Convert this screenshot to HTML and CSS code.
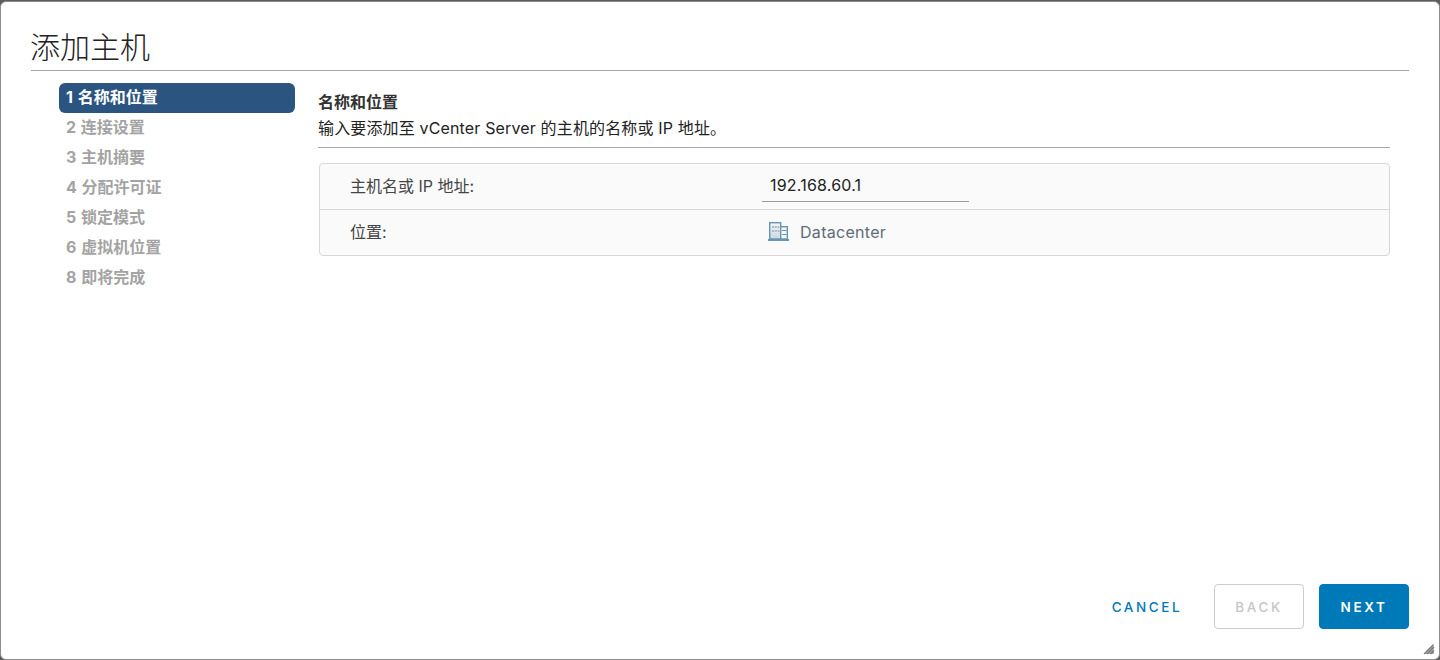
FILE: index.html
```html
<!DOCTYPE html>
<html lang="zh-CN">
<head>
    <meta charset="UTF-8">
    <title>添加主机</title>
    <link rel="stylesheet" href="styles.css">
</head>
<body>
    <div class="modal">
        <h1 class="modal-title">添加主机</h1>

        <div class="wizard">
            <!-- Steps -->
            <ul class="steps">
                <li class="step active">1 名称和位置</li>
                <li class="step">2 连接设置</li>
                <li class="step">3 主机摘要</li>
                <li class="step">4 分配许可证</li>
                <li class="step">5 锁定模式</li>
                <li class="step">6 虚拟机位置</li>
                <li class="step">8 即将完成</li>
            </ul>

            <!-- Current step -->
            <div class="content">
                <div class="content-head">
                    <h3>名称和位置</h3>
                    <p>输入要添加至 vCenter Server 的主机的名称或 IP 地址。</p>
                </div>
                <div class="form-box">
                    <div class="form-row">
                        <label class="form-label" for="hostName">主机名或 IP 地址:</label>
                        <input class="form-input" type="text" id="hostName" value="192.168.60.1">
                    </div>
                    <div class="form-row">
                        <span class="form-label">位置:</span>
                        <span class="location">
                            <svg class="dc-icon" width="21" height="19" viewBox="0 0 21 19">
                                <defs>
                                    <linearGradient id="dcFill" x1="0" y1="0" x2="0" y2="1">
                                        <stop offset="0" stop-color="#f4f6f7"/>
                                        <stop offset="1" stop-color="#c9d8e1"/>
                                    </linearGradient>
                                </defs>
                                <rect x="1.700" y="0.700" width="11" height="16.300" fill="url(#dcFill)" stroke="#6595b0" stroke-width="1.400"/>
                                <rect x="12.700" y="4.700" width="6.600" height="12.300" fill="#f7f8f9" stroke="#6595b0" stroke-width="1.400"/>
                                <path d="M4 4h2v2H4zM6.800 4h2v2h-2zM9.600 4h1.800v2H9.600zM4 8h2v2H4zM6.800 8h2v2h-2zM9.600 8h1.800v2H9.600z" fill="#a9bcc8"/>
                                <path d="M14 8.500h4.500M14 12.500h4.500" stroke="#6595b0"/>
                                <rect x="0" y="17" width="21" height="2" fill="#6595b0"/>
                            </svg>
                            Datacenter
                        </span>
                    </div>
                </div>
            </div>
        </div>

        <div class="modal-footer">
            <button class="btn btn-link">CANCEL</button>
            <button class="btn btn-back" disabled>BACK</button>
            <button class="btn btn-next">NEXT</button>
        </div>

        <svg class="resize-grip" width="12" height="12" viewBox="0 0 12 12">
            <path d="M1 11L10.500 1.500L11 11z" fill="#a8a8a8"/>
            <path d="M1 11L10.500 1.500M4 11l7-7M7.500 11l3.500-3.500" stroke="#777" stroke-width="1.100"/>
        </svg>
    </div>
</body>
</html>
```

FILE: styles.css
```css
html, body {
    height: 100%;
}
body {
    margin: 0;
    background-color: #5c5c5c;
    font-family: "Inter", "Noto Sans CJK SC", sans-serif;
    color: #333;
    overflow: hidden;
}
.modal {
    position: relative;
    box-sizing: border-box;
    height: 659px;
    margin-top: 1px;
    padding: 0 30px 30px;
    background-color: #fff;
    border: 1px solid #8c8c8c;
    border-radius: 6px;
    display: flex;
    flex-direction: column;
}
.modal-title {
    margin: 0;
    height: 69px;
    padding-top: 25px;
    box-sizing: border-box;
    font-size: 30px;
    font-weight: 300;
    line-height: 40px;
    text-indent: -1px;
    color: #222;
    border-bottom: 1px solid #a6a6a6;
}
.wizard {
    flex: 1;
    display: flex;
}
.steps {
    list-style-type: none;
    width: 236px;
    margin: 12px 0 0 28px;
    padding: 0;
    flex-shrink: 0;
}
.step {
    height: 30px;
    line-height: 29px;
    padding-left: 7px;
    font-size: 16px;
    font-weight: 700;
    word-spacing: 1px;
    color: #a3a3a3;
    border-radius: 6px;
}
.step.active {
    color: #fff;
    background-color: #2b5580;
}
.content {
    flex: 1;
    margin: 21px 19px 0 23px;
}
.content-head {
    padding-bottom: 9px;
    border-bottom: 1px solid #a6a6a6;
}
.content-head h3 {
    margin: 0;
    font-size: 16px;
    font-weight: 700;
    line-height: 20px;
    color: #333;
}
.content-head p {
    margin: 6px 0 0;
    font-size: 16px;
    line-height: 20px;
    letter-spacing: 0.15px;
    color: #222;
}
.form-box {
    margin: 15px 0 0 1px;
    background-color: #fafafa;
    border: 1px solid #d7d7d7;
    border-radius: 4px;
}
.form-row {
    display: flex;
    align-items: center;
    height: 43px;
    padding-bottom: 2px;
    padding-left: 30px;
    font-size: 16px;
}
.form-row + .form-row {
    border-top: 1px solid #d7d7d7;
}
.form-label {
    width: 412px;
    margin-bottom: 2px;
    color: #444;
}
.form-input {
    width: 207px;
    box-sizing: border-box;
    height: 29px;
    margin-top: 3px;
    padding: 0 8px 3px;
    border: 0;
    border-bottom: 1px solid #9a9a9a;
    background: transparent;
    font-family: inherit;
    font-size: 16px;
    letter-spacing: 0.2px;
    color: #222;
}
.location {
    display: flex;
    align-items: center;
    gap: 11px;
    margin-left: 6px;
    letter-spacing: 0.3px;
    color: #5f6b76;
}
.modal-footer {
    display: flex;
    justify-content: flex-end;
    align-items: center;
    gap: 15px;
}
.btn {
    height: 45px;
    border-radius: 4px;
    font-family: inherit;
    font-size: 13.500px;
    font-weight: 500;
    letter-spacing: 2.600px;
    background: none;
    border: 1px solid transparent;
}
.btn-link {
    width: 90px;
    color: #0079b8;
}
.btn-back {
    width: 90px;
    margin-left: 7px;
    color: #c6c6c6;
    border-color: #cccccc;
}
.btn-next {
    width: 90px;
    font-weight: 600;
    color: #fff;
    background-color: #0079b8;
    border-color: #0079b8;
}
.resize-grip {
    position: absolute;
    right: 4px;
    bottom: 4px;
}
```
